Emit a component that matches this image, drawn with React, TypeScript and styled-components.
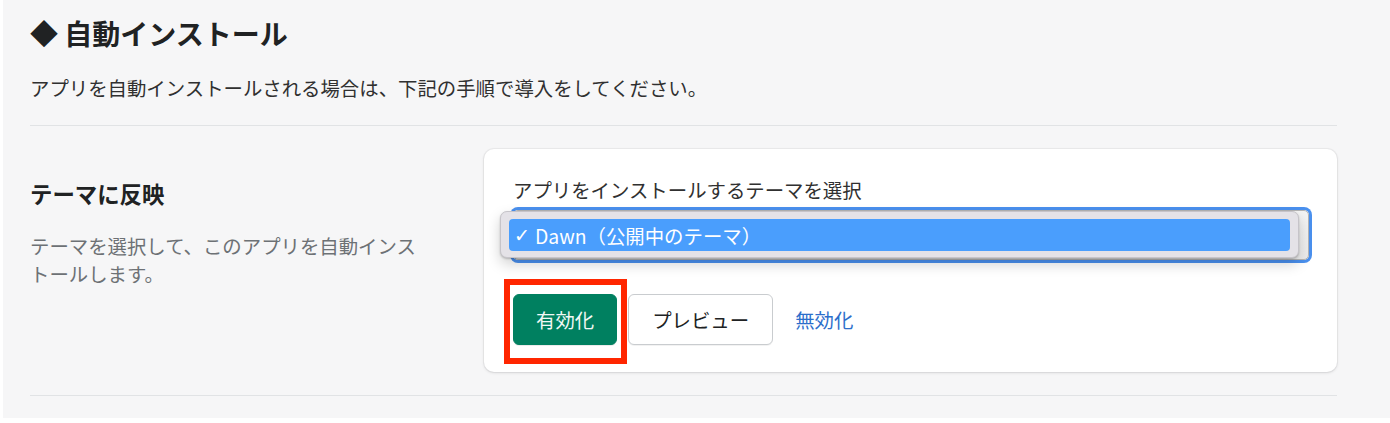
import React from 'react';
import styled, { createGlobalStyle } from 'styled-components';

const GlobalStyle = createGlobalStyle`
	body {
		margin: 0;
		background: #ffffff;
		font-family: 'Noto Sans CJK JP', 'Noto Sans', sans-serif;
	}
`;

const Page = styled.div`
	margin-left: 3px;
	height: 418px;
	box-sizing: border-box;
	padding: 15px 53px 0 27px;
	background: #f6f6f7;
	overflow: hidden;
`;

const Title = styled.h2`
	margin: 0;
	font-size: 28px;
	line-height: 36px;
	font-weight: 700;
	color: #202223;
`;

const Lead = styled.p`
	margin: 23px 0 0;
	font-size: 19.4px;
	line-height: 28px;
	color: #303030;
`;

const Divider = styled.hr<{ $gap: number }>`
	margin: ${(p) => p.$gap}px 0 0;
	border: 0;
	height: 1px;
	background: #e1e3e5;
`;

const Row = styled.div`
	display: grid;
	grid-template-columns: 454px 1fr;
	margin-top: 23px;
`;

const Aside = styled.div`
	padding-top: 29px;
	max-width: 400px;
`;

const AsideTitle = styled.h3`
	margin: 0;
	font-size: 22.4px;
	line-height: 30px;
	font-weight: 700;
	color: #202223;
`;

const AsideText = styled.p`
	margin: 24px 0 0;
	font-size: 19.4px;
	line-height: 28px;
	color: #6d7175;
`;

const Card = styled.div`
	background: #ffffff;
	border-radius: 10px;
	padding: 28px 28px 27px 29px;
	box-shadow: 0 0 0 1px rgba(63, 63, 68, 0.05), 0 1px 3px rgba(63, 63, 68, 0.15);
`;

const Label = styled.div`
	font-size: 19.4px;
	line-height: 26px;
	color: #303030;
`;

const SelectBox = styled.div`
	position: relative;
	margin-top: 7px;
	height: 50px;
	box-sizing: border-box;
	border: 1px solid #b4b4b4;
	border-radius: 5px;
	background: linear-gradient(#f4f4f4, #ebebeb);
	box-shadow: 0 0 0 3px #4a90ee;
`;

const Popup = styled.div`
	position: absolute;
	left: -14px;
	right: 9px;
	top: 0;
	bottom: 1px;
	box-sizing: border-box;
	padding: 7px 8px 8px 8px;
	background: #e4e2e7;
	border: 1px solid #c6c4c9;
	border-radius: 7px;
	box-shadow: 0 6px 14px rgba(0, 0, 0, 0.18), 0 1px 2px rgba(0, 0, 0, 0.2);
`;

const Option = styled.div`
	height: 32px;
	display: flex;
	align-items: center;
	gap: 5px;
	padding-left: 5px;
	border-radius: 4px;
	background: #4a9efd;
	color: #ffffff;
	font-size: 19.4px;
`;

const Check = styled.span`
	font-family: 'DejaVu Sans', sans-serif;
	font-size: 19px;
	line-height: 1;
`;

const Actions = styled.div`
	display: flex;
	align-items: center;
	gap: 11px;
	margin-top: 34px;
`;

const Button = styled.button<{ $primary?: boolean }>`
	height: 51px;
	box-sizing: border-box;
	padding: 0 ${(p) => (p.$primary ? 22 : 23)}px;
	border-radius: 6px;
	font-family: inherit;
	font-size: 19.4px;
	cursor: pointer;
	border: 1px solid ${(p) => (p.$primary ? '#008060' : '#c9cccf')};
	background: ${(p) => (p.$primary ? '#008060' : '#ffffff')};
	color: ${(p) => (p.$primary ? '#f1f8f5' : '#202223')};
	box-shadow: ${(p) =>
		p.$primary ? '0 1px 0 rgba(0, 0, 0, 0.08)' : '0 1px 0 rgba(0, 0, 0, 0.05)'};
`;

const Highlighted = styled.span`
	position: relative;
	display: inline-flex;
	&::after {
		content: '';
		position: absolute;
		left: -9px;
		right: -10px;
		top: -15px;
		bottom: -19px;
		border: 6px solid #ff2600;
		pointer-events: none;
	}
`;

const TextLink = styled.a`
	margin-left: 11px;
	font-size: 19.4px;
	color: #2c6ecb;
	text-decoration: none;
	cursor: pointer;
`;

export default function App() {
	return (
		<>
			<GlobalStyle />
			<Page>
				<Title>◆ 自動インストール</Title>
				<Lead>アプリを自動インストールされる場合は、下記の手順で導入をしてください。</Lead>
				<Divider $gap={23} />
				<Row>
					<Aside>
						<AsideTitle>テーマに反映</AsideTitle>
						<AsideText>テーマを選択して、このアプリを自動インストールします。</AsideText>
					</Aside>
					<Card>
						<Label>アプリをインストールするテーマを選択</Label>
						<SelectBox>
							<Popup>
								<Option>
									<Check>✓</Check>
									<span>Dawn（公開中のテーマ）</span>
								</Option>
							</Popup>
						</SelectBox>
						<Actions>
							<Highlighted>
								<Button $primary>有効化</Button>
							</Highlighted>
							<Button>プレビュー</Button>
							<TextLink>無効化</TextLink>
						</Actions>
					</Card>
				</Row>
				<Divider $gap={23} />
			</Page>
		</>
	);
}
